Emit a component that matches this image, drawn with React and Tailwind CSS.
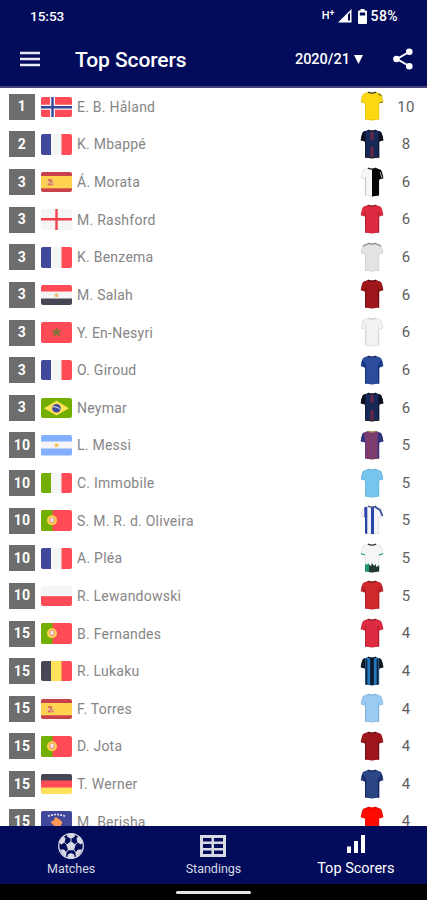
import React from 'react';

const PLAYERS = [
  { rank: 1, name: 'E. B. Håland', flag: 'no', shirt: 'dortmund', goals: 10 },
  { rank: 2, name: 'K. Mbappé', flag: 'fr', shirt: 'psg', goals: 8 },
  { rank: 3, name: 'Á. Morata', flag: 'es', shirt: 'juventus', goals: 6 },
  { rank: 3, name: 'M. Rashford', flag: 'en', shirt: 'united', goals: 6 },
  { rank: 3, name: 'K. Benzema', flag: 'fr', shirt: 'madrid', goals: 6 },
  { rank: 3, name: 'M. Salah', flag: 'eg', shirt: 'liverpool', goals: 6 },
  { rank: 3, name: 'Y. En-Nesyri', flag: 'ma', shirt: 'sevilla', goals: 6 },
  { rank: 3, name: 'O. Giroud', flag: 'fr', shirt: 'chelsea', goals: 6 },
  { rank: 3, name: 'Neymar', flag: 'br', shirt: 'psg', goals: 6 },
  { rank: 10, name: 'L. Messi', flag: 'ar', shirt: 'barcelona', goals: 5 },
  { rank: 10, name: 'C. Immobile', flag: 'it', shirt: 'lazio', goals: 5 },
  { rank: 10, name: 'S. M. R. d. Oliveira', flag: 'pt', shirt: 'porto', goals: 5 },
  { rank: 10, name: 'A. Pléa', flag: 'fr', shirt: 'gladbach', goals: 5 },
  { rank: 10, name: 'R. Lewandowski', flag: 'pl', shirt: 'bayern', goals: 5 },
  { rank: 15, name: 'B. Fernandes', flag: 'pt', shirt: 'united', goals: 4 },
  { rank: 15, name: 'R. Lukaku', flag: 'be', shirt: 'inter', goals: 4 },
  { rank: 15, name: 'F. Torres', flag: 'es', shirt: 'city', goals: 4 },
  { rank: 15, name: 'D. Jota', flag: 'pt', shirt: 'liverpool', goals: 4 },
  { rank: 15, name: 'T. Werner', flag: 'de', shirt: 'chelseaDark', goals: 4 },
  { rank: 15, name: 'M. Berisha', flag: 'xk', shirt: 'salzburg', goals: 4 },
];

const Vertical = ({ a, b, c }) => (
  <>
    <rect width="10.5" height="21" fill={a} />
    <rect x="10" width="11" height="21" fill={b} />
    <rect x="20.5" width="10.5" height="21" fill={c} />
  </>
);

const Horizontal = ({ a, b, c }) => (
  <>
    <rect width="31" height="7" fill={a} />
    <rect y="6.5" width="31" height="7.5" fill={b} />
    <rect y="13.5" width="31" height="7" fill={c} />
  </>
);

const FLAGS = {
  no: (
    <>
      <rect width="31" height="21" fill="#ff4b55" />
      <path d="M11.5 0v21M0 10.200h31" stroke="#f5f5f5" strokeWidth="5" />
      <path d="M11.5 0v21M0 10.200h31" stroke="#34459a" strokeWidth="2.4" />
    </>
  ),
  fr: <Vertical a="#41479b" b="#f5f5f5" c="#ff4b55" />,
  it: <Vertical a="#73af00" b="#f5f5f5" c="#ff4b55" />,
  be: <Vertical a="#464655" b="#ffe15a" c="#ff4b55" />,
  de: <Horizontal a="#464655" b="#ff4b55" c="#ffe15a" />,
  eg: (
    <>
      <Horizontal a="#ff4b55" b="#f5f5f5" c="#464655" />
      <path d="M15.5 7.8l.8 1.3 1.6-.3-.8 1.6.2 1.4-1.8.4-1.8-.4.2-1.4-.8-1.6 1.6.3z" fill="#ecc072" />
    </>
  ),
  ar: (
    <>
      <Horizontal a="#82afff" b="#f5f5f5" c="#82afff" />
      <circle cx="15.5" cy="10.2" r="2" fill="#f6c65b" />
    </>
  ),
  es: (
    <>
      <rect width="31" height="21" fill="#c8414b" />
      <rect y="4" width="31" height="12.3" fill="#ffd250" />
      <path d="M5 8.2h1v5H5zM12 8.2h1v5h-1z" fill="#e7c08d" />
      <path d="M6.5 7.5l2.4-.8 2.5 1-.7 1.5 1.800 3.800-3.200.6-2.800-.3 1.300-2.600z" fill="#d8705c" />
      <path d="M7.3 9.2h1.6v1.5H7.3zM9.3 11h1.5v1.3H9.3z" fill="#f3dfcf" />
    </>
  ),
  en: (
    <>
      <rect width="31" height="21" fill="#f5f5f5" />
      <path d="M15.5 0v21M0 10.200h31" stroke="#f4404e" strokeWidth="2.4" />
    </>
  ),
  ma: (
    <>
      <rect width="31" height="21" fill="#ff4b55" />
      <path d="M15.5 5.8l3 8.2-7.6-5h9.2l-7.6 5z" fill="#a8623c" stroke="#73793a" strokeWidth=".9" />
    </>
  ),
  br: (
    <>
      <rect width="31" height="21" fill="#73af00" />
      <path d="M15.5 2.8L28 10.200l-12.500 7.200L3 10.200z" fill="#ffe15a" />
      <circle cx="15.5" cy="10.200" r="4.300" fill="#41479b" />
      <path d="M11.5 8.800c3-.4 6 .6 8 3" stroke="#f5f5f5" strokeWidth="1" fill="none" />
    </>
  ),
  pt: (
    <>
      <rect width="31" height="21" fill="#ff4b55" />
      <rect width="11.5" height="21" fill="#73af00" />
      <circle cx="11" cy="10.200" r="5" fill="#ffd250" />
      <path d="M8.500 7.400h5v3.300c0 3.300-5 3.300-5 0z" fill="#f08a78" />
      <path d="M9.500 8.100h3v2.600c0 1.800-3 1.800-3 0z" fill="#eee6ea" />
    </>
  ),
  pl: (
    <>
      <rect width="31" height="11" fill="#f5f5f5" />
      <rect y="10.200" width="31" height="10.500" fill="#ff4b55" />
    </>
  ),
  xk: (
    <>
      <rect width="31" height="21" fill="#41479b" />
      <path d="M7 5.200Q15.500 1.800 24 5.200" stroke="#dfe1f2" strokeWidth="1.700" strokeDasharray="2 1.100" fill="none" />
      <path d="M14.500 6l3 1.800 4 3.200-1.500 3.500-3.800 2-1.700 1.800-1.500-3.600L9.500 11l3-1.600z" fill="#ff9b57" />
    </>
  ),
};

function Flag({ code }) {
  return (
    <svg viewBox="0 0 31 20.5" className="h-[20.5px] w-[31px] shrink-0 rounded-[2px]">
      {FLAGS[code]}
    </svg>
  );
}

const OUTLINE = 'M8 1Q12 2.400 16 1L20.500 2.800Q22 3.600 23.400 11.200L19.200 12.400V28.600Q12 30.200 5 28.600V12.400L.7 11.200Q2 3.600 3.500 2.800Z';

const SHIRTS = {
  dortmund: { base: '#fbd811', collar: '#3d3820', trim: <path d="M18 3l4.500 2M19.500 12l4-1" stroke="#7b6b16" strokeWidth="1.200" /> },
  psg: {
    base: '#172a57',
    collar: '#11162c',
    trim: (
      <>
        <path d="M0 2h5.500v27H0zM18.500 2H24v27h-5.500z" fill="#0e1122" />
        <path d="M12.200 3v8M12.200 18v10" stroke="#6d2545" strokeWidth="3" />
        <path d="M4 28.500h16" stroke="#2c2631" strokeWidth="1.600" />
      </>
    ),
  },
  juventus: {
    base: '#f7f7f7',
    collar: '#242424',
    trim: (
      <>
        <path d="M12 1h12v12l-4.800 1v16H12z" fill="#050505" />
        <path d="M20 5l2 6" stroke="#ddd" strokeWidth=".8" />
        <path d="M5.500 10v18" stroke="#c9c9c9" strokeWidth=".8" />
      </>
    ),
  },
  united: { base: '#dd2c42', collar: '#951b2b', trim: <path d="M5.500 8v21M18.500 8v21" stroke="#bd2036" strokeWidth="1.500" /> },
  madrid: { base: '#e3e3e2', collar: '#8a8a88', trim: <path d="M3 4l5-2M16 2l5 2" stroke="#a5a5a3" strokeWidth="1.500" /> },
  liverpool: { base: '#9e171c', collar: '#5c0c10', trim: <path d="M5.500 9v20M18.500 9v20" stroke="#7c1015" strokeWidth="1.400" /> },
  sevilla: { base: '#f2f2f2', collar: '#d0d0d0', trim: <path d="M6 9v19M18.500 9v19M4 5l2 5" stroke="#e0e0e0" strokeWidth="1" /> },
  chelsea: { base: '#2c4d9b', collar: '#192c67', trim: <path d="M2 6l3 5v18M22 6l-3 5v18" stroke="#173484" strokeWidth="2.300" fill="none" /> },
  chelseaDark: { base: '#294583', collar: '#1b225c', trim: <path d="M2 6l3 5v18M22 6l-3 5v18" stroke="#172b69" strokeWidth="2.300" fill="none" /> },
  barcelona: {
    base: '#793e73',
    collar: '#a68c50',
    trim: (
      <>
        <path d="M0 3h4l1 9H0zM18 3h6v10h-6z" fill="#2d3683" />
        <path d="M8.500 3v26M14 3v26" stroke="#86395f" strokeWidth="1.500" />
        <path d="M18.500 6v23" stroke="#40367b" strokeWidth="2" />
      </>
    ),
  },
  lazio: { base: '#75c5ec', collar: '#67b1d8', trim: null },
  porto: {
    base: '#f3f4f8',
    collar: '#434d83',
    trim: (
      <>
        <path d="M5.800 2v27M12.500 2v27" stroke="#2b46a8" strokeWidth="3" />
        <path d="M15 2l5 3 2.500 6" stroke="#304a97" strokeWidth="1.700" fill="none" />
      </>
    ),
  },
  gladbach: {
    base: '#f5f6f6',
    collar: '#333',
    trim: (
      <>
        <path d="M4 20l3 2 1-2 2 2V30H4z" fill="#229866" />
        <path d="M9 30v-8l2 1 1-3 2 3 2-2v3l4-2v8z" fill="#203a32" />
        <path d="M0 11l5 1.300M19 12.300l5-1.300" stroke="#3db083" strokeWidth="2" />
      </>
    ),
  },
  bayern: { base: '#cf292d', collar: '#771818', trim: <path d="M2 6l3 5v18M22 6l-3 5v18" stroke="#b11f25" strokeWidth="1.700" fill="none" /> },
  inter: {
    base: '#2477bd',
    collar: '#101820',
    trim: (
      <>
        <path d="M0 2h5v12H0zM19 2h5v12h-5z" fill="#131a20" />
        <path d="M6.500 3v26M17.500 3v26" stroke="#102137" strokeWidth="1.700" />
        <path d="M12 2v27" stroke="#0d1626" strokeWidth="3.600" />
      </>
    ),
  },
  city: { base: '#9bcbf3', collar: '#84b8df', trim: <path d="M5.500 9v20M18.500 9v20" stroke="#8abce6" strokeWidth="1.200" /> },
  salzburg: { base: '#ff0903', collar: '#df0905', trim: null },
};

function Shirt({ team, id }) {
  const { base, collar, trim } = SHIRTS[team];
  return (
    <svg viewBox="0 0 24 30" className="-mt-px h-[30px] w-6 shrink-0">
      <clipPath id={id}>
        <path d={OUTLINE} />
      </clipPath>
      <g clipPath={`url(#${id})`}>
        <rect width="24" height="30" fill={base} />
        {trim}
        <path d={OUTLINE} fill="none" stroke="#000" strokeOpacity=".14" strokeWidth="1" />
      </g>
      <path d="M8 1.200Q12 3.200 16 1.200" fill="none" stroke={collar} strokeWidth="1.300" />
    </svg>
  );
}

function PlayerRow({ player, index }) {
  return (
    <div className="flex h-[37.63px] shrink-0 items-center pl-[9px]">
      <div className="flex h-[26px] w-[26px] shrink-0 items-center justify-center bg-[#6d6d6d] text-[14px] font-bold tracking-[0.3px] text-white">
        {player.rank}
      </div>
      <div className="ml-[6px] flex">
        <Flag code={player.flag} />
      </div>
      <div className="ml-[5px] flex-1 whitespace-nowrap pt-px text-[14px] tracking-[0.25px] text-[#858585]">{player.name}</div>
      <Shirt team={player.shirt} id={`shirt-${index}`} />
      <div className="w-[43px] pl-px text-center text-[15px] tracking-[0.2px] text-[#606060]">{player.goals}</div>
    </div>
  );
}

function StatusBar() {
  return (
    <div className="flex h-8 items-center pl-[30px] pr-[29px] text-[13.5px] font-medium text-white">
      <span className="flex-1">15:53</span>
      <span className="text-[11px]">H</span>
      <span className="-mt-1 text-[9px]">+</span>
      <svg viewBox="0 0 14 14" className="ml-[3px] h-[14px] w-[14px]">
        <path d="M0 13.500L13.500 0v13.500z" fill="#fff" />
        <path d="M10 5.500v6h2v-8z" fill="#030c5b" />
      </svg>
      <svg viewBox="0 0 9 15" className="ml-[6px] h-[15px] w-[9px]">
        <path d="M2.500 0h4v1.500H8q1 0 1 1V14q0 1-1 1H1q-1 0-1-1V2.500q0-1 1-1h1.500z" fill="#fff" />
        <path d="M1.800 3.500h5.400v3H1.800z" fill="#030c5b" />
      </svg>
      <span className="ml-[4px] text-[14px] tracking-[0.4px]">58%</span>
    </div>
  );
}

function Header() {
  return (
    <header className="h-[88px] shrink-0 border-b-2 border-[#49427f] bg-[#030c5b]">
      <StatusBar />
      <div className="flex h-[54px] items-center pl-5 text-white">
        <svg viewBox="0 0 20 16" className="h-4 w-5" stroke="#e8e8f4" strokeWidth="2.700">
          <path d="M0 2h20M0 8h20M0 14h20" />
        </svg>
        <h1 className="ml-[35px] flex-1 pt-px text-[21px] font-medium leading-7 tracking-[-0.1px]">Top Scorers</h1>
        <span className="pt-px text-[14.5px] font-medium">2020/21</span>
        <svg viewBox="0 0 9 9" className="ml-[4px] h-[9px] w-[9px]">
          <path d="M0 0h9L4.500 9z" fill="#fff" />
        </svg>
        <svg viewBox="0 0 20 22" className="ml-[30px] mr-[14px] h-[22px] w-5">
          <path d="M16 4L4 11l12 7" fill="none" stroke="#fff" strokeWidth="2" />
          <circle cx="16.300" cy="3.700" r="3.300" fill="#fff" />
          <circle cx="3.500" cy="11" r="3.300" fill="#fff" />
          <circle cx="16.300" cy="18.300" r="3.300" fill="#fff" />
        </svg>
      </div>
    </header>
  );
}

const BallIcon = () => (
  <svg viewBox="0 0 26 26" className="h-[26px] w-[26px]">
    <circle cx="13" cy="13" r="12.300" fill="#030c5b" stroke="#d8d9e4" strokeWidth="1.300" />
    <g fill="#d8d9e4">
      <path d="M13 8.300l4.700 3.400-1.800 5.500h-5.800l-1.800-5.500z" />
      <path d="M8.700 1.300Q13-.3 17.300 1.300L16.500 4 13 5.800 9.500 4z" />
      <path d="M1 9.500Q2 5.500 5.500 3l2 2.500-1 4-3.300 2z" />
      <path d="M25 9.500Q24 5.500 20.500 3l-2 2.500 1 4 3.300 2z" />
      <path d="M2 16.500h4l2.500 3L8 24Q4 22 2 16.500z" />
      <path d="M24 16.500h-4l-2.500 3L18 24q4-2 6-7.500z" />
      <path d="M9.800 21.500L13 20l3.200 1.500.5 3.400Q13 26 9.300 24.900z" />
    </g>
    <path d="M13 5.500v3M6.500 9.500l2.200 2M19.500 9.500l-2.200 2M10 17l-1.800 2.500M16 17l1.800 2.500" stroke="#d8d9e4" strokeWidth="1" />
  </svg>
);

const TableIcon = () => (
  <svg viewBox="0 0 26 22" className="h-[22px] w-[26px]">
    <path fillRule="evenodd" d="M0 0h26v22H0zM3 3v3.500h8.500V3zM14 3v3.500h9V3zM3 9v4h8.500V9zM14 9v4h9V9zM3 15.500V19h8.500v-3.500zM14 15.500V19h9v-3.500z" fill="#d8d9e4" />
  </svg>
);

const ChartIcon = () => (
  <svg viewBox="0 0 18 18" className="h-[18px] w-[18px]">
    <path d="M0 11.500h4V18H0zM7 6h4v12H7zM14 0h4v18h-4z" fill="#fff" />
  </svg>
);

function BottomNav() {
  return (
    <nav className="grid h-[58px] shrink-0 grid-cols-3 bg-[#030c5b] text-[#d8d9e4]">
      <div className="flex flex-col items-center pt-[7px]">
        <BallIcon />
        <span className="mt-[2px] text-[12.5px] leading-4">Matches</span>
      </div>
      <div className="flex flex-col items-center pt-[9px]">
        <TableIcon />
        <span className="mt-1 text-[12.5px] leading-4">Standings</span>
      </div>
      <div className="flex flex-col items-center pt-[9px] text-white">
        <ChartIcon />
        <span className="mt-[8px] text-[14.5px] leading-4">Top Scorers</span>
      </div>
    </nav>
  );
}

export default function App() {
  return (
    <div className="flex h-[900px] w-[427px] flex-col overflow-hidden bg-white font-['Roboto',sans-serif]">
      <Header />
      <main className="flex min-h-0 flex-1 flex-col overflow-hidden">
        {PLAYERS.map((p, i) => (
          <PlayerRow key={p.name} player={p} index={i} />
        ))}
      </main>
      <BottomNav />
      <div className="flex h-4 shrink-0 justify-center bg-black pt-[7px]">
        <div className="h-[3px] w-[75px] rounded-full bg-[#e4e4e4]" />
      </div>
    </div>
  );
}
